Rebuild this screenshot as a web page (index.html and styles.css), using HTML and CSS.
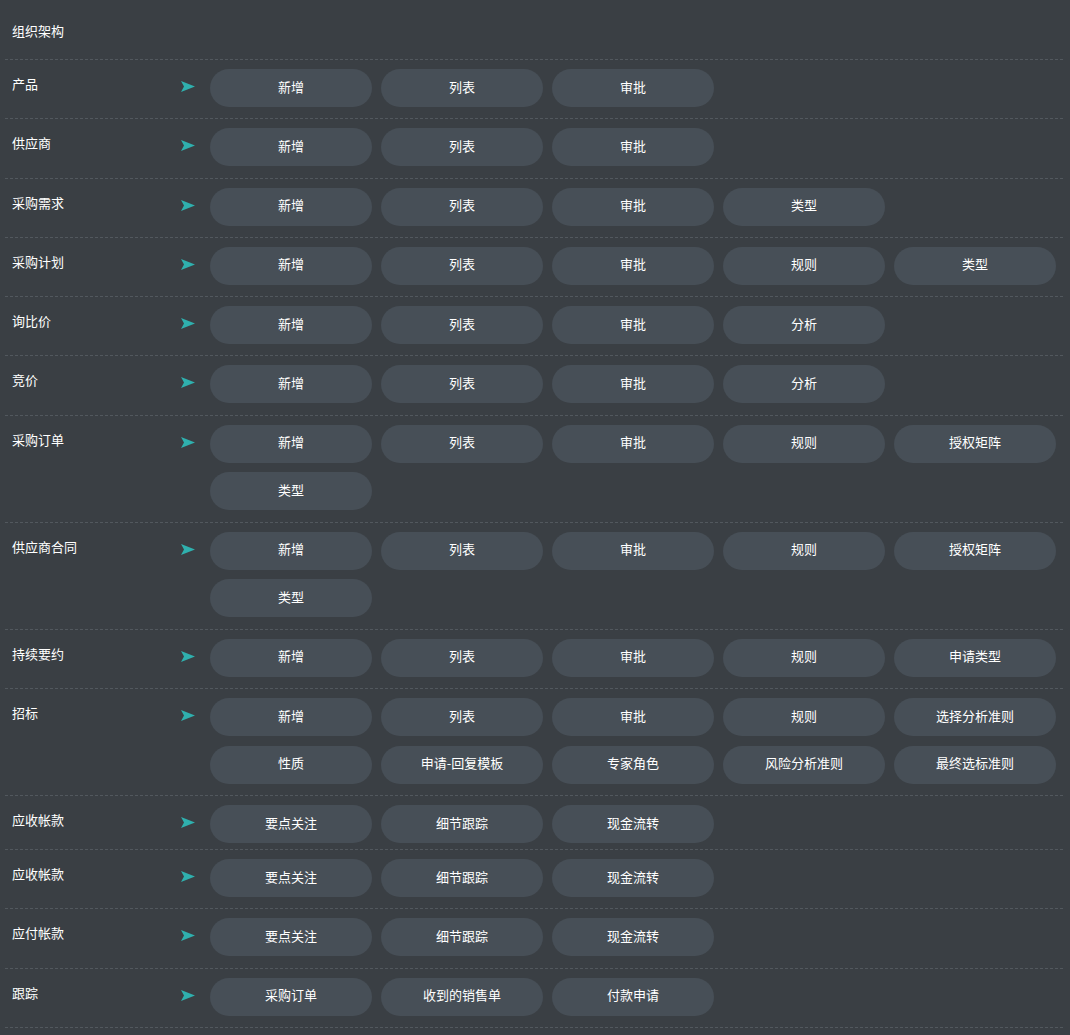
FILE: index.html
```html
<!DOCTYPE html>
<html lang="zh-CN">
<head>
<meta charset="utf-8">
<title>组织架构</title>
<link rel="stylesheet" href="styles.css">
</head>
<body>
<div class="page">
  <div class="row row-head"><div class="label">组织架构</div></div>

  <div class="row">
    <div class="label">产品</div>
    <div class="arrow"><svg width="14" height="11" viewBox="0 0 14 11"><path d="M0 0 L14 5.5 L0 11 L3 5.5 Z"/></svg></div>
    <div class="btns"><span class="btn">新增</span><span class="btn">列表</span><span class="btn">审批</span></div>
  </div>

  <div class="row">
    <div class="label">供应商</div>
    <div class="arrow"><svg width="14" height="11" viewBox="0 0 14 11"><path d="M0 0 L14 5.5 L0 11 L3 5.5 Z"/></svg></div>
    <div class="btns"><span class="btn">新增</span><span class="btn">列表</span><span class="btn">审批</span></div>
  </div>

  <div class="row">
    <div class="label">采购需求</div>
    <div class="arrow"><svg width="14" height="11" viewBox="0 0 14 11"><path d="M0 0 L14 5.5 L0 11 L3 5.5 Z"/></svg></div>
    <div class="btns"><span class="btn">新增</span><span class="btn">列表</span><span class="btn">审批</span><span class="btn">类型</span></div>
  </div>

  <div class="row">
    <div class="label">采购计划</div>
    <div class="arrow"><svg width="14" height="11" viewBox="0 0 14 11"><path d="M0 0 L14 5.5 L0 11 L3 5.5 Z"/></svg></div>
    <div class="btns"><span class="btn">新增</span><span class="btn">列表</span><span class="btn">审批</span><span class="btn">规则</span><span class="btn">类型</span></div>
  </div>

  <div class="row">
    <div class="label">询比价</div>
    <div class="arrow"><svg width="14" height="11" viewBox="0 0 14 11"><path d="M0 0 L14 5.5 L0 11 L3 5.5 Z"/></svg></div>
    <div class="btns"><span class="btn">新增</span><span class="btn">列表</span><span class="btn">审批</span><span class="btn">分析</span></div>
  </div>

  <div class="row">
    <div class="label">竞价</div>
    <div class="arrow"><svg width="14" height="11" viewBox="0 0 14 11"><path d="M0 0 L14 5.5 L0 11 L3 5.5 Z"/></svg></div>
    <div class="btns"><span class="btn">新增</span><span class="btn">列表</span><span class="btn">审批</span><span class="btn">分析</span></div>
  </div>

  <div class="row">
    <div class="label">采购订单</div>
    <div class="arrow"><svg width="14" height="11" viewBox="0 0 14 11"><path d="M0 0 L14 5.5 L0 11 L3 5.5 Z"/></svg></div>
    <div class="btns"><span class="btn">新增</span><span class="btn">列表</span><span class="btn">审批</span><span class="btn">规则</span><span class="btn">授权矩阵</span><span class="btn">类型</span></div>
  </div>

  <div class="row">
    <div class="label">供应商合同</div>
    <div class="arrow"><svg width="14" height="11" viewBox="0 0 14 11"><path d="M0 0 L14 5.5 L0 11 L3 5.5 Z"/></svg></div>
    <div class="btns"><span class="btn">新增</span><span class="btn">列表</span><span class="btn">审批</span><span class="btn">规则</span><span class="btn">授权矩阵</span><span class="btn">类型</span></div>
  </div>

  <div class="row">
    <div class="label">持续要约</div>
    <div class="arrow"><svg width="14" height="11" viewBox="0 0 14 11"><path d="M0 0 L14 5.5 L0 11 L3 5.5 Z"/></svg></div>
    <div class="btns"><span class="btn">新增</span><span class="btn">列表</span><span class="btn">审批</span><span class="btn">规则</span><span class="btn">申请类型</span></div>
  </div>

  <div class="row">
    <div class="label">招标</div>
    <div class="arrow"><svg width="14" height="11" viewBox="0 0 14 11"><path d="M0 0 L14 5.5 L0 11 L3 5.5 Z"/></svg></div>
    <div class="btns"><span class="btn">新增</span><span class="btn">列表</span><span class="btn">审批</span><span class="btn">规则</span><span class="btn">选择分析准则</span><span class="btn">性质</span><span class="btn">申请-回复模板</span><span class="btn">专家角色</span><span class="btn">风险分析准则</span><span class="btn">最终选标准则</span></div>
  </div>

  <div class="row row-short">
    <div class="label">应收帐款</div>
    <div class="arrow"><svg width="14" height="11" viewBox="0 0 14 11"><path d="M0 0 L14 5.5 L0 11 L3 5.5 Z"/></svg></div>
    <div class="btns"><span class="btn">要点关注</span><span class="btn">细节跟踪</span><span class="btn">现金流转</span></div>
  </div>

  <div class="row">
    <div class="label">应收帐款</div>
    <div class="arrow"><svg width="14" height="11" viewBox="0 0 14 11"><path d="M0 0 L14 5.5 L0 11 L3 5.5 Z"/></svg></div>
    <div class="btns"><span class="btn">要点关注</span><span class="btn">细节跟踪</span><span class="btn">现金流转</span></div>
  </div>

  <div class="row">
    <div class="label">应付帐款</div>
    <div class="arrow"><svg width="14" height="11" viewBox="0 0 14 11"><path d="M0 0 L14 5.5 L0 11 L3 5.5 Z"/></svg></div>
    <div class="btns"><span class="btn">要点关注</span><span class="btn">细节跟踪</span><span class="btn">现金流转</span></div>
  </div>

  <div class="row">
    <div class="label">跟踪</div>
    <div class="arrow"><svg width="14" height="11" viewBox="0 0 14 11"><path d="M0 0 L14 5.5 L0 11 L3 5.5 Z"/></svg></div>
    <div class="btns"><span class="btn">采购订单</span><span class="btn">收到的销售单</span><span class="btn">付款申请</span></div>
  </div>
</div>
</body>
</html>
```

FILE: styles.css
```css
html, body {
  margin: 0;
  padding: 0;
  background: #3a3f44;
}

body {
  font-family: "Noto Sans CJK SC", "Noto Sans", sans-serif;
  font-size: 13px;
  color: #ffffff;
}

.page {
  padding: 0 7px 0 5px;
}

.row {
  display: flex;
  align-items: flex-start;
  padding: 9px 0 11.3px 7px;
  border-bottom: 1px dashed #52585e;
}

.row-head {
  padding: 21px 0 18px 7px;
}

.row-short {
  padding-bottom: 6px;
}

.label {
  width: 169px;
  flex: none;
  line-height: 20px;
  padding-top: 5px;
  font-size: 13px;
  color: #ffffff;
}

.row-head .label {
  padding-top: 0;
}

.arrow {
  width: 29px;
  flex: none;
  padding-top: 12px;
  height: 26px;
}

.arrow svg {
  display: block;
  fill: #2fb0ae;
}

.btns {
  display: grid;
  grid-template-columns: repeat(5, 162px);
  column-gap: 9px;
  row-gap: 9.7px;
}

.btn {
  display: flex;
  align-items: center;
  justify-content: center;
  box-sizing: border-box;
  height: 38px;
  padding-bottom: 4px;
  border-radius: 19px;
  background: #474f57;
  color: #ffffff;
  font-size: 13px;
  white-space: nowrap;
}
```
